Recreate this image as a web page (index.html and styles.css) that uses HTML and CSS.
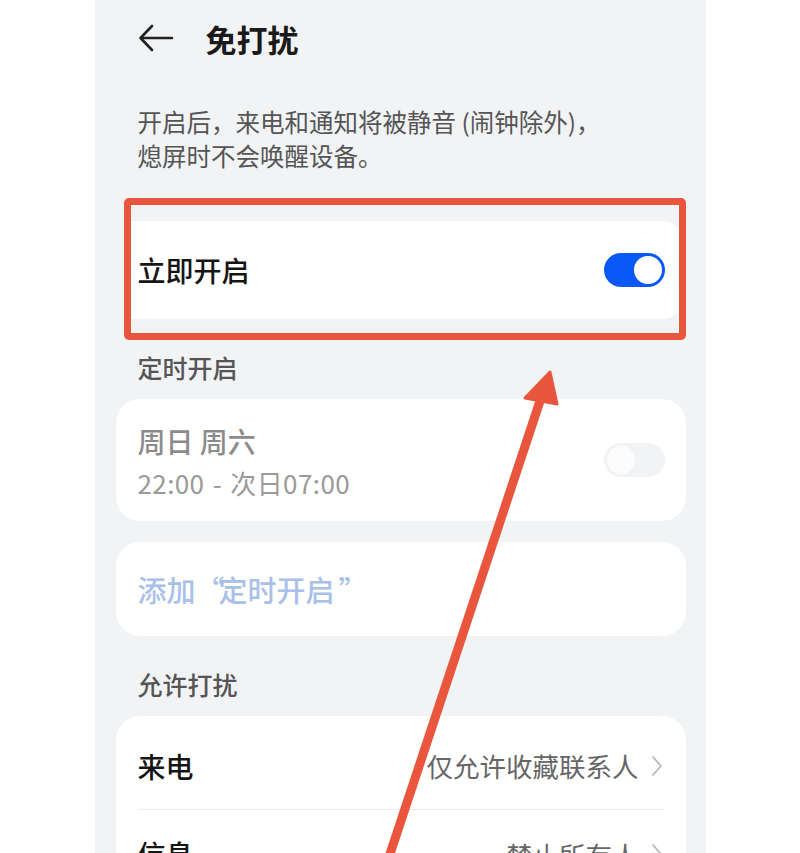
FILE: index.html
```html
<!DOCTYPE html>
<html lang="zh-CN">
<head>
<meta charset="utf-8">
<title>免打扰</title>
<link rel="stylesheet" href="styles.css">
</head>
<body>
<div class="phone">
  <header class="topbar">
    <svg class="back" width="36" height="28" viewBox="0 0 36 28" aria-hidden="true">
      <path d="M34 14 H3 M14 2 L2.5 14 L14 26" fill="none" stroke="#222" stroke-width="2.6" stroke-linecap="round" stroke-linejoin="round"/>
    </svg>
    <h1 class="title">免打扰</h1>
  </header>

  <p class="desc">开启后，来电和通知将被静音 (闹钟除外)，<br>熄屏时不会唤醒设备。</p>

  <div class="content">
    <div class="card card-now">
      <span class="label-main">立即开启</span>
      <span class="toggle on"><span class="knob"></span></span>
      <span class="highlight"></span>
    </div>

    <div class="section-title">定时开启</div>
    <div class="card card-schedule">
      <div class="sched-text">
        <div class="sched-days">周日 周六</div>
        <div class="sched-time">22:00 - 次日07:00</div>
      </div>
      <span class="toggle off"><span class="knob"></span></span>
    </div>

    <div class="card card-add">
      <span class="add-text">添加<span class="q">“</span>定时开启<span class="q2">”</span></span>
    </div>

    <div class="section-title">允许打扰</div>
    <div class="card card-list">
      <div class="row first">
        <span class="label-main">来电</span>
        <span class="value">仅允许收藏联系人<svg class="chev" width="12" height="22" viewBox="0 0 12 22" aria-hidden="true"><path d="M2 2 L10 11 L2 20" fill="none" stroke="#b8b8b8" stroke-width="1.8" stroke-linecap="round" stroke-linejoin="round"/></svg></span>
      </div>
      <div class="row">
        <span class="label-main">信息</span>
        <span class="value">禁止所有人<svg class="chev" width="12" height="22" viewBox="0 0 12 22" aria-hidden="true"><path d="M2 2 L10 11 L2 20" fill="none" stroke="#b8b8b8" stroke-width="1.8" stroke-linecap="round" stroke-linejoin="round"/></svg></span>
      </div>
    </div>
  </div>
</div>

<svg class="arrow" width="800" height="853" viewBox="0 0 800 853" aria-hidden="true">
  <line x1="388" y1="860" x2="541" y2="398" stroke="#e9553d" stroke-width="9" stroke-linecap="round"/>
  <polygon points="550,372 525,398 557,404" fill="#e9553d" stroke="#e9553d" stroke-width="3" stroke-linejoin="round"/>
</svg>
</body>
</html>
```

FILE: styles.css
```css
* { box-sizing: border-box; }

html, body {
  margin: 0;
  padding: 0;
  background: #ffffff;
  height: 853px;
  overflow: hidden;
}

body {
  position: relative;
  font-family: "Noto Sans CJK SC", "Noto Sans", sans-serif;
}

.phone {
  width: 611px;
  margin: 0 auto;
  height: 853px;
  background: #f1f3f5;
  overflow: hidden;
}

.topbar {
  height: 80px;
  display: flex;
  align-items: center;
  padding-left: 43px;
  padding-bottom: 4px;
  gap: 32px;
}

.back { display: block; }

.title {
  margin: 0;
  font-size: 31px;
  font-weight: 700;
  color: #1a1a1a;
  line-height: 1;
}

.desc {
  margin: 25px 0 0;
  padding: 0 43px;
  font-size: 24.5px;
  line-height: 34px;
  color: #555;
}

.content {
  padding: 0 20px 0 21px;
  margin-top: 48px;
}

.card {
  background: #fff;
  border-radius: 24px;
  padding: 0 21px 0 22px;
  position: relative;
}

.card-now {
  height: 98px;
  margin-left: 10px;
  padding-left: 12px;
  border-radius: 0 24px 24px 0;
  display: flex;
  align-items: center;
  justify-content: space-between;
}

.highlight {
  position: absolute;
  left: -2px;
  right: 0;
  top: -23px;
  bottom: -21px;
  border: 7px solid #e9553d;
  border-radius: 5px;
  pointer-events: none;
}

.label-main {
  font-size: 28px;
  font-weight: 500;
  color: #151515;
  line-height: 40px;
}

.toggle {
  width: 61px;
  height: 34px;
  border-radius: 17px;
  position: relative;
  flex: none;
}

.toggle .knob {
  position: absolute;
  top: 3px;
  width: 28px;
  height: 28px;
  border-radius: 50%;
  background: #fff;
}

.toggle.on { background: #0a59f7; }
.toggle.on .knob { right: 3px; }

.toggle.off { background: #f2f3f4; }
.toggle.off .knob { left: 3px; background: #fcfcfc; }

.section-title {
  height: 80px;
  padding: 16px 0 0 22px;
  display: flex;
  align-items: center;
  font-size: 25px;
  font-weight: 500;
  color: #555;
}

.card-schedule {
  height: 122px;
  display: flex;
  align-items: center;
  justify-content: space-between;
}

.sched-text { padding-top: 2px; }

.sched-days {
  font-size: 28px;
  line-height: 40px;
  color: #8c8c8c;
  font-weight: 500;
}

.sched-time {
  margin-top: 4px;
  font-size: 26px;
  line-height: 36px;
  color: #9a9a9a;
  letter-spacing: 0.4px;
  word-spacing: 2px;
}

.card-add {
  margin-top: 21px;
  height: 94px;
  display: flex;
  align-items: center;
}

.add-text {
  font-size: 29px;
  color: #a9c0ea;
  font-weight: 500;
}

.add-text .q {
  letter-spacing: -6px;
}

.add-text .q2 {
  margin-left: 4px;
}

.row {
  height: 88px;
  display: flex;
  align-items: center;
  justify-content: space-between;
}

.row.first {
  height: 94px;
  padding-top: 6px;
  border-bottom: 1px solid #ebebeb;
}

.value {
  display: flex;
  align-items: center;
  gap: 12px;
  font-size: 26.5px;
  color: #666;
}

.chev { display: block; margin-right: 2px; }

.arrow {
  position: absolute;
  left: 0;
  top: 0;
  pointer-events: none;
}
```
